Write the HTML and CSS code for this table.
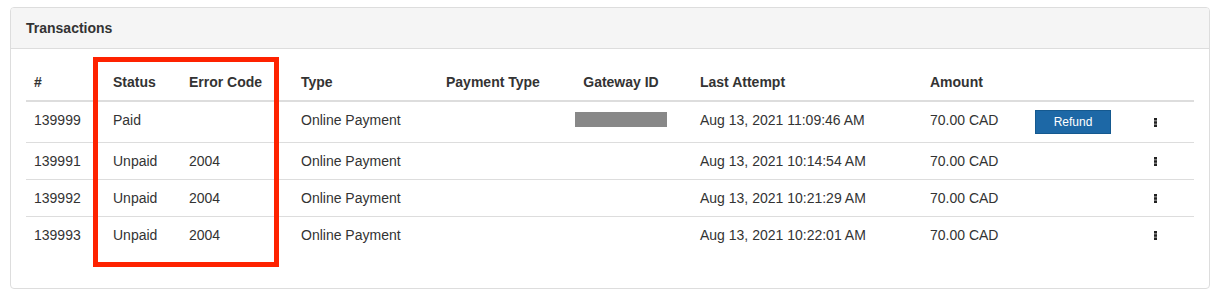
FILE: index.html
```html
<!DOCTYPE html>
<html>
<head>
<meta charset="utf-8">
<link rel="stylesheet" href="styles.css">
</head>
<body>
<div class="panel">
  <div class="panel-heading">Transactions</div>
  <div class="panel-body">
    <table class="table">
      <colgroup>
        <col class="c-id"><col class="c-status"><col class="c-error"><col class="c-type"><col class="c-ptype"><col class="c-gw"><col class="c-last"><col class="c-amount"><col class="c-action"><col class="c-menu">
      </colgroup>
      <thead>
        <tr>
          <th>#</th><th>Status</th><th>Error Code</th><th>Type</th><th>Payment Type</th><th class="center">Gateway ID</th><th>Last Attempt</th><th>Amount</th><th></th><th></th>
        </tr>
      </thead>
      <tbody>
        <tr>
          <td>139999</td><td>Paid</td><td></td><td>Online Payment</td><td></td><td class="center"><span class="redacted"></span></td><td>Aug 13, 2021 11:09:46 AM</td><td>70.00 CAD</td><td><button class="btn-refund">Refund</button></td><td class="menu"><svg class="dots first" width="3" height="9" viewBox="0 0 3 9"><rect x="0" y="0" width="3" height="2.6"/><rect x="0" y="3.2" width="3" height="2.6"/><rect x="0" y="6.4" width="3" height="2.6"/></svg></td>
        </tr>
        <tr>
          <td>139991</td><td>Unpaid</td><td>2004</td><td>Online Payment</td><td></td><td></td><td>Aug 13, 2021 10:14:54 AM</td><td>70.00 CAD</td><td></td><td class="menu"><svg class="dots" width="3" height="9" viewBox="0 0 3 9"><rect x="0" y="0" width="3" height="2.6"/><rect x="0" y="3.2" width="3" height="2.6"/><rect x="0" y="6.4" width="3" height="2.6"/></svg></td>
        </tr>
        <tr>
          <td>139992</td><td>Unpaid</td><td>2004</td><td>Online Payment</td><td></td><td></td><td>Aug 13, 2021 10:21:29 AM</td><td>70.00 CAD</td><td></td><td class="menu"><svg class="dots" width="3" height="9" viewBox="0 0 3 9"><rect x="0" y="0" width="3" height="2.6"/><rect x="0" y="3.2" width="3" height="2.6"/><rect x="0" y="6.4" width="3" height="2.6"/></svg></td>
        </tr>
        <tr>
          <td>139993</td><td>Unpaid</td><td>2004</td><td>Online Payment</td><td></td><td></td><td>Aug 13, 2021 10:22:01 AM</td><td>70.00 CAD</td><td></td><td class="menu"><svg class="dots" width="3" height="9" viewBox="0 0 3 9"><rect x="0" y="0" width="3" height="2.6"/><rect x="0" y="3.2" width="3" height="2.6"/><rect x="0" y="6.4" width="3" height="2.6"/></svg></td>
        </tr>
      </tbody>
    </table>
  </div>
  <div class="highlight"></div>
</div>
</body>
</html>
```

FILE: styles.css
```css
html, body {
  margin: 0;
  padding: 0;
  background: #ffffff;
}
body {
  font-family: "Liberation Sans", Arial, Helvetica, sans-serif;
  font-size: 14px;
  line-height: 20px;
  color: #333333;
}
.panel {
  position: relative;
  margin: 7px 9px 0 10px;
  border: 1px solid #dddddd;
  border-radius: 4px;
  background: #ffffff;
}
.panel-heading {
  padding: 10px 15px;
  background: #f5f5f5;
  border-bottom: 1px solid #dddddd;
  border-radius: 3px 3px 0 0;
  font-weight: bold;
  font-size: 14px;
  line-height: 20px;
  color: #333333;
}
.panel-body {
  padding: 15px;
}
.table {
  width: 100%;
  border-collapse: collapse;
  border-spacing: 0;
  table-layout: fixed;
  margin-bottom: 20px;
}
.c-id { width: 79px; }
.c-status { width: 76px; }
.c-error { width: 112px; }
.c-type { width: 145px; }
.c-ptype { width: 112px; }
.c-gw { width: 142px; }
.c-last { width: 230px; }
.c-amount { width: 105px; }
.c-action { width: 120px; }
.c-menu { width: 47px; }
.table th {
  text-align: left;
  font-weight: bold;
  padding: 8px;
  vertical-align: bottom;
  border-bottom: 2px solid #dddddd;
  white-space: nowrap;
}
.table td {
  padding: 8px;
  vertical-align: top;
  border-top: 1px solid #dddddd;
  white-space: nowrap;
}
.table tbody tr:first-child td {
  border-top: 0;
}
.table .center {
  text-align: center;
}
.redacted {
  display: inline-block;
  width: 92px;
  height: 15px;
  margin-top: 2px;
  vertical-align: top;
  background: #888888;
}
.btn-refund {
  display: block;
  width: 76px;
  height: 24px;
  padding: 0;
  margin: 0;
  border: 1px solid #15598f;
  border-radius: 0;
  background: #1d68a6;
  color: #ffffff;
  font-family: "Liberation Sans", Arial, Helvetica, sans-serif;
  font-size: 12px;
  line-height: 22px;
  text-align: center;
}
.table td.menu {
  padding-left: 7px;
}
.dots {
  display: block;
  margin-top: 6px;
  fill: #222222;
}
.dots.first {
  margin-top: 8px;
}
.highlight {
  position: absolute;
  left: 82px;
  top: 49px;
  width: 176px;
  height: 200px;
  border: 5px solid #fe2200;
  pointer-events: none;
}
```
